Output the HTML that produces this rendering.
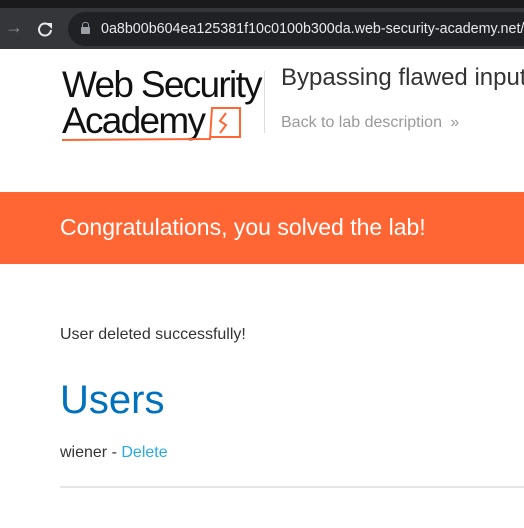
<!DOCTYPE html>
<html><head><style>
*{margin:0;padding:0;box-sizing:border-box}
body{width:524px;height:528px;overflow:hidden;background:#fff;font-family:"Liberation Sans",Arial,sans-serif;position:relative}
.abs{position:absolute;white-space:nowrap}
</style></head><body>
<div class="abs" style="left:0;top:0;width:524px;height:8px;background:#1a1a1c"></div>
<div class="abs" style="left:0;top:8px;width:524px;height:41px;background:#35363a"></div>
<div class="abs" style="left:68px;top:12px;width:470px;height:34px;background:#202124;border-radius:17px"></div>
<div class="abs" style="left:5px;top:17px;color:#8a8b8e;font-size:18px">→</div>
<svg class="abs" style="left:37px;top:21px" width="16" height="16" viewBox="0 0 16 16"><path d="M12.5 4.5A6 6 0 1 0 14 9" fill="none" stroke="#e8eaed" stroke-width="2"/><path d="M9 2h6v6z" fill="#e8eaed"/></svg>
<div class="abs" style="left:81px;top:27px;width:9px;height:7px;background:#9aa0a6;border-radius:1px"></div>
<div class="abs" style="left:82px;top:22px;width:7px;height:7px;border:1.5px solid #9aa0a6;border-radius:3px 3px 0 0"></div>
<div class="abs" style="left:101px;top:21px;color:#e8eaed;font-size:14.3px">0a8b00b604ea125381f10c0100b300da.web-security-academy.net/</div>

<div class="abs" style="left:62px;top:66px;font-size:37px;letter-spacing:-1.7px;color:#111;line-height:38px">Web Security</div>
<div class="abs" style="left:62px;top:102px;font-size:37px;letter-spacing:-1.7px;color:#111;line-height:38px">Academy</div>
<svg class="abs" style="left:60px;top:105px" width="185" height="40"><path d="M2 35 L150 34 L152 3 L180 3 L180 32 L150 32" fill="none" stroke="#ff6633" stroke-width="2"/><path d="M166 8 L160 16 L166 20 L160 28" fill="none" stroke="#ff6633" stroke-width="2"/></svg>
<div class="abs" style="left:264px;top:71px;width:1px;height:62px;background:#ddd"></div>
<div class="abs" style="left:281px;top:64px;font-size:24px;color:#333">Bypassing flawed input</div>
<div class="abs" style="left:281px;top:114px;font-size:16px;color:#999">Back to lab description <span style="margin-left:4px">»</span></div>

<div class="abs" style="left:0;top:192px;width:524px;height:72px;background:#ff6633"></div>
<div class="abs" style="left:60px;top:214px;font-size:23px;color:#fff">Congratulations, you solved the lab!</div>

<div class="abs" style="left:60px;top:326px;font-size:16px;color:#333">User deleted successfully!</div>
<div class="abs" style="left:60px;top:378px;font-size:40px;color:#0071bc">Users</div>
<div class="abs" style="left:60px;top:444px;font-size:16px;color:#333">wiener - <span style="color:#29abe2">Delete</span></div>
<div class="abs" style="left:60px;top:486px;width:464px;height:2px;background:#e6e6e6"></div>
</body></html>
